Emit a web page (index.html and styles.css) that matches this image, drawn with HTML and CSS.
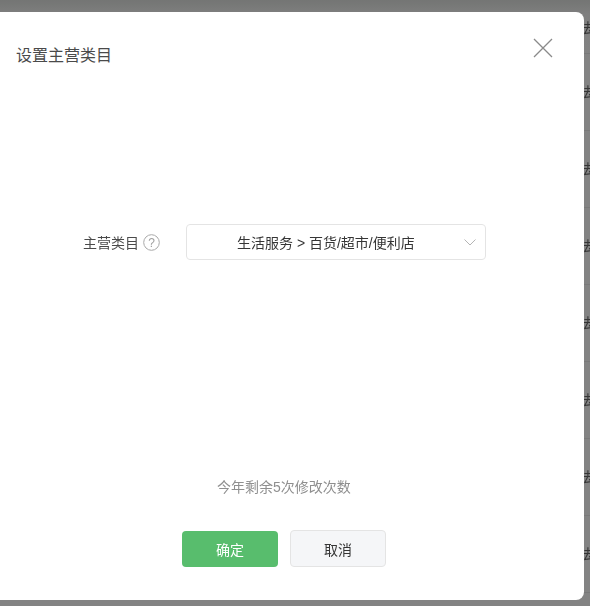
FILE: index.html
```html
<!DOCTYPE html>
<html lang="zh">
<head>
<meta charset="utf-8">
<title>设置主营类目</title>
<link rel="stylesheet" href="styles.css">
</head>
<body>
<div class="page">
  <div class="head-row"><span class="cell">法</span></div>
  <div class="row"><span class="cell">法</span></div>
  <div class="row"><span class="cell">法</span></div>
  <div class="row"><span class="cell">法</span></div>
  <div class="row"><span class="cell">法</span></div>
  <div class="row"><span class="cell">法</span></div>
  <div class="row"><span class="cell">法</span></div>
  <div class="row"><span class="cell">法</span></div>
</div>
<div class="mask"></div>
<div class="modal">
  <div class="modal-head">
    <h2 class="title">设置主营类目</h2>
    <svg class="close" width="20" height="20" viewBox="0 0 20 20"><path d="M1 1L19 19M19 1L1 19" stroke="#8a8a8a" stroke-width="1.3" fill="none"/></svg>
  </div>
  <div class="form-row">
    <label class="label">主营类目
      <svg class="help" width="17" height="17" viewBox="0 0 17 17"><circle cx="8.5" cy="8.5" r="7.8" fill="none" stroke="#a8a8a8" stroke-width="1"/><text x="8.5" y="12.7" text-anchor="middle" class="help-mark">?</text></svg>
    </label>
    <div class="select">
      <span class="select-text">生活服务 &gt; 百货/超市/便利店</span>
      <svg class="chev" width="12" height="7" viewBox="0 0 12 7"><path d="M0.5 0.5L6 6L11.5 0.5" stroke="#b4b4b4" stroke-width="1" fill="none"/></svg>
    </div>
  </div>
  <p class="tip">今年剩余5次修改次数</p>
  <div class="actions">
    <button class="btn primary">确定</button>
    <button class="btn plain">取消</button>
  </div>
</div>
</body>
</html>
```
FILE: styles.css
```css
* { box-sizing: border-box; }
html, body { margin: 0; height: 100%; overflow: hidden; }
body { width: 590px; height: 606px; background: #fff; font-family: "Liberation Sans", "Noto Sans CJK SC", sans-serif; color: #353535; position: relative; }
.page { width: 590px; height: 606px; overflow: hidden; }
.head-row { height: 54px; padding-top: 20px; border-bottom: 1px solid #ececec; display: flex; }
.row { height: 77px; padding-top: 30px; border-bottom: 1px solid #ececec; display: flex; }
.cell { font-size: 14px; line-height: 16px; margin-left: 579px; white-space: nowrap; color: #666; }
.mask { position: absolute; inset: 0; background: linear-gradient(#6f716f 0, #7b7b7b 14px, #7f7f7f 60px); opacity: .97; mix-blend-mode: multiply; }
.modal { position: absolute; left: -16px; top: 12px; width: 600px; height: 588px; background: #fff; border-radius: 8px; display: flex; flex-direction: column; padding-left: 32px; }
.modal-head { height: 212px; display: flex; justify-content: space-between; align-items: flex-start; padding-right: 31px; }
.title { margin: 0; padding-top: 33px; font-size: 16px; line-height: 22px; font-weight: 400; color: #4a4a4a; }
.close { margin-top: 26px; }
.form-row { display: flex; align-items: center; height: 36px; padding-left: 67px; }
.label { width: 103px; flex: none; font-size: 14px; color: #4a4a4a; display: flex; align-items: center; gap: 4px; white-space: nowrap; }
.help-mark { font-size: 12px; fill: #a0a0a0; }
.select { width: 300px; height: 36px; border: 1px solid #e4e4e4; border-radius: 4px; display: flex; align-items: center; padding-left: 50px; padding-right: 9px; justify-content: space-between; }
.select-text { font-size: 14px; color: #353535; white-space: nowrap; }
.tip { margin: 217px 0 0; padding-left: 201px; font-size: 14px; line-height: 20px; color: #8f8f8f; }
.actions { margin-top: 33px; padding-left: 166px; display: flex; gap: 12px; align-items: center; }
.btn { width: 96px; height: 37px; border-radius: 4px; font: 14px "Liberation Sans", "Noto Sans CJK SC", sans-serif; padding: 0; }
.primary { background: #58bd6d; color: #fff; border: 0; height: 36px; }
.plain { background: #f5f6f8; color: #353535; border: 1px solid #e4e4e4; }
```
